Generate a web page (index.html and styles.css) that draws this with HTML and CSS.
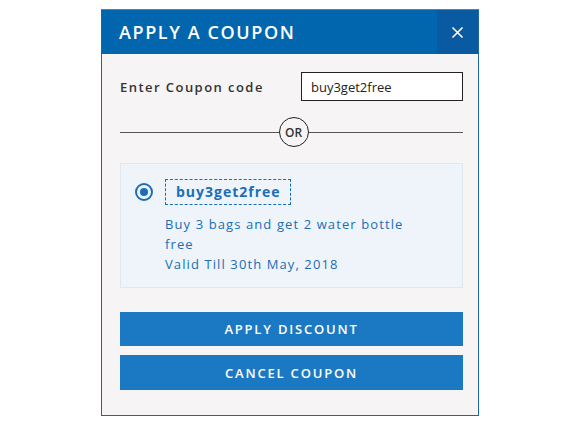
FILE: index.html
```html
<!DOCTYPE html>
<html lang="en">

<head>
    <meta charset="UTF-8">
    <meta name="viewport" content="width=device-width, initial-scale=1.0">
    <title>Apply a coupon</title>
    <link rel="stylesheet" href="styles.css">
</head>

<body>
    <div class="modal">
        <div class="modal-header">
            <h1>APPLY A COUPON</h1>
            <button class="close-btn" aria-label="Close">
                <svg width="13" height="13" viewBox="0 0 13 13">
                    <path d="M1.5 1.5 L11.5 11.5 M11.5 1.5 L1.5 11.5" stroke="#fff" stroke-width="1.6" fill="none" />
                </svg>
            </button>
        </div>

        <div class="modal-body">
            <div class="code-row">
                <label for="code">Enter Coupon code</label>
                <input id="code" type="text" value="buy3get2free">
            </div>

            <div class="divider">
                <span class="or">OR</span>
            </div>

            <div class="coupon-card">
                <span class="radio"><span class="dot"></span></span>
                <div class="coupon-info">
                    <div class="coupon-code">buy3get2free</div>
                    <p class="coupon-desc">Buy 3 bags and get 2 water bottle free<br>Valid Till 30th May, 2018</p>
                </div>
            </div>

            <button class="action-btn">APPLY DISCOUNT</button>
            <button class="action-btn">CANCEL COUPON</button>
        </div>
    </div>
</body>

</html>
```
FILE: styles.css
```css
body {
    margin: 0;
    padding-top: 9px;
    background: #fff;
    font-family: "Open Sans", "Liberation Sans", Arial, sans-serif;
}

.modal {
    width: 376px;
    margin: 0 auto;
    background: #f6f4f4;
    border: 1px solid #1c66a6;
    border-top-color: #7a7a7a;
}

.modal-header {
    display: flex;
    align-items: stretch;
    height: 44px;
    background: #0166ae;
}

.modal-header h1 {
    flex: 1;
    margin: 0;
    padding-left: 17px;
    color: #fff;
    font-size: 18px;
    font-weight: 600;
    letter-spacing: 1.6px;
    line-height: 45px;
}

.close-btn {
    width: 41px;
    border: none;
    padding: 0;
    background: #0a5aa1;
    display: flex;
    align-items: center;
    justify-content: center;
    cursor: pointer;
}

.modal-body {
    padding: 18px 15px 25px 18px;
}

.code-row {
    display: flex;
    align-items: center;
    justify-content: space-between;
}

.code-row label {
    color: #333;
    font-size: 13px;
    font-weight: 600;
    letter-spacing: 1.45px;
}

.code-row input {
    width: 162px;
    height: 29px;
    box-sizing: border-box;
    border: 1px solid #222;
    background: #fff;
    padding: 0 9px;
    font-family: inherit;
    font-size: 13px;
    color: #222;
    outline: none;
}

.divider {
    position: relative;
    display: flex;
    justify-content: center;
    margin: 16px 0;
}

.divider::before {
    content: "";
    position: absolute;
    left: 0;
    right: 0;
    top: 15px;
    border-top: 1px solid #555;
}

.or {
    position: relative;
    width: 28px;
    height: 28px;
    border: 1px solid #222;
    border-radius: 50%;
    background: #f6f4f4;
    display: flex;
    align-items: center;
    justify-content: center;
    font-size: 12px;
    font-weight: 600;
    color: #333;
    margin-left: 4px;
}

.coupon-card {
    display: flex;
    align-items: flex-start;
    gap: 12px;
    padding: 15px 14px 13px 14px;
    background: #eef4f9;
    border: 1px solid #dde8f1;
    margin-bottom: 24px;
}

.radio {
    margin-top: 4px;
    width: 14px;
    height: 14px;
    border: 2px solid #1a6eb8;
    border-radius: 50%;
    display: flex;
    align-items: center;
    justify-content: center;
}

.dot {
    width: 8px;
    height: 8px;
    border-radius: 50%;
    background: #1a6eb8;
}

.coupon-code {
    display: inline-block;
    border: 1px dashed #1a6eb8;
    padding: 0 9px 0 10px;
    line-height: 24px;
    color: #1a6eb8;
    font-size: 14px;
    font-weight: 700;
    letter-spacing: 1px;
}

.coupon-desc {
    margin: 9px 0 0;
    max-width: 250px;
    color: #1a6eb8;
    font-size: 13px;
    line-height: 20px;
    letter-spacing: 1.1px;
}

.action-btn {
    display: block;
    width: 100%;
    height: 34px;
    border: none;
    background: #1b79c4;
    color: #fff;
    font-family: inherit;
    font-size: 13px;
    font-weight: 600;
    letter-spacing: 1.8px;
    cursor: pointer;
}

.action-btn + .action-btn {
    margin-top: 9px;
    height: 35px;
}
```
